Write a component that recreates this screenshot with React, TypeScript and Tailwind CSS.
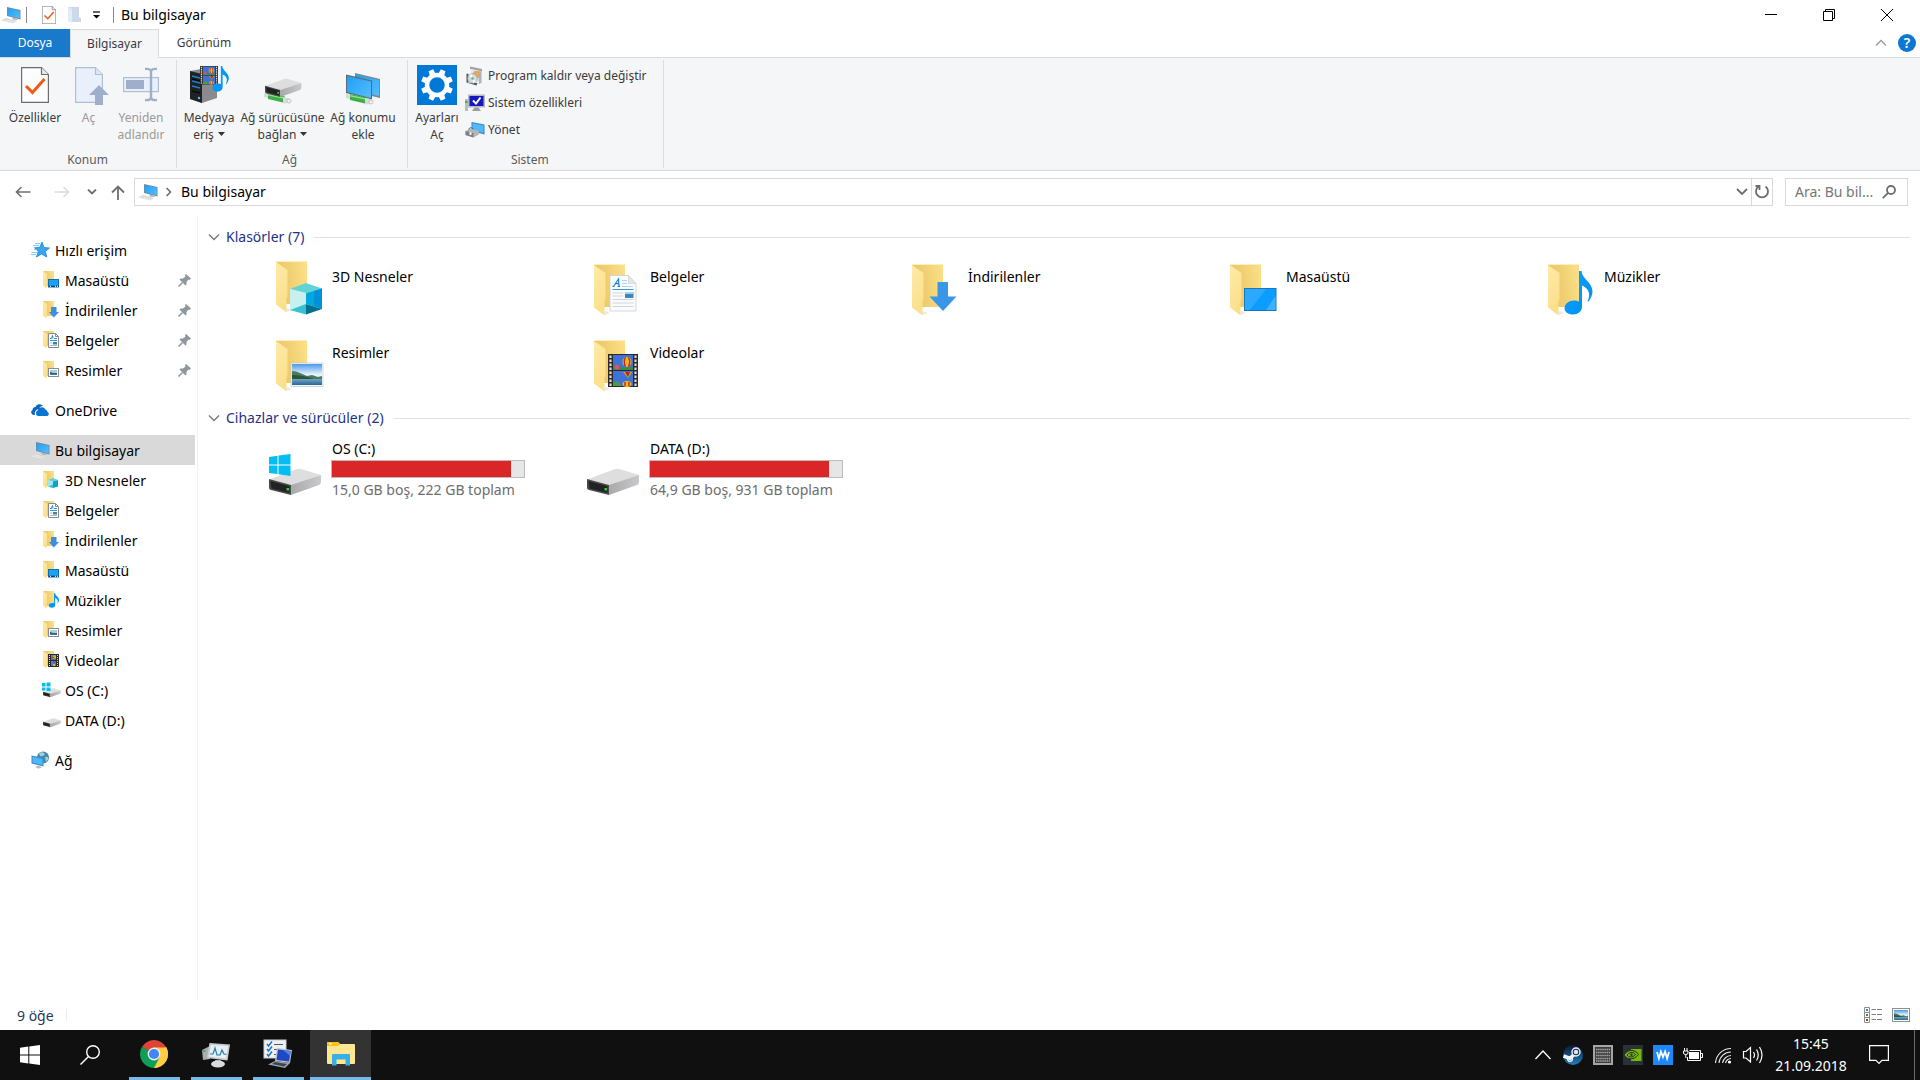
import React from 'react'

type Overlay = 'cube' | 'doc' | 'down' | 'desktop' | 'music' | 'picture' | 'video'

const Gradients: React.FC = () => (
  <svg className="absolute h-0 w-0" aria-hidden="true">
    <defs>
      <linearGradient id="folderBack" x1="0" y1="0.4" x2="1" y2="0.2">
        <stop offset="0.2" stopColor="#ecc96b" />
        <stop offset="1" stopColor="#fbdf87" />
      </linearGradient>
      <linearGradient id="folderFlap" x1="0" y1="0" x2="0.4" y2="1">
        <stop offset="0" stopColor="#ffeaa9" />
        <stop offset="1" stopColor="#fbdf8a" />
      </linearGradient>
      <linearGradient id="screen" x1="0" y1="0" x2="1" y2="1">
        <stop offset="0" stopColor="#1f9ff5" />
        <stop offset="1" stopColor="#56bdff" />
      </linearGradient>
      <linearGradient id="sky" x1="0" y1="0" x2="0" y2="1">
        <stop offset="0" stopColor="#4f98e8" />
        <stop offset="0.5" stopColor="#e6f4fd" />
        <stop offset="1" stopColor="#cfe6f2" />
      </linearGradient>
      <linearGradient id="lake" x1="0" y1="0" x2="0" y2="1">
        <stop offset="0" stopColor="#6fa5c4" />
        <stop offset="1" stopColor="#2b6597" />
      </linearGradient>
      <linearGradient id="driveSide" x1="0" y1="0" x2="1" y2="0">
        <stop offset="0" stopColor="#a9a9ab" />
        <stop offset="1" stopColor="#c9c9cb" />
      </linearGradient>
      <linearGradient id="note" x1="0" y1="0" x2="1" y2="1">
        <stop offset="0" stopColor="#0aa0f8" />
        <stop offset="1" stopColor="#0090f5" />
      </linearGradient>
      <linearGradient id="steam" x1="0" y1="0" x2="0" y2="1">
        <stop offset="0" stopColor="#0b1635" />
        <stop offset="1" stopColor="#1f80bd" />
      </linearGradient>
    </defs>
  </svg>
)

const Landscape: React.FC = () => (
  <>
    <rect x="0" y="0" width="30" height="21" fill="url(#sky)" />
    <path d="M0 7 Q4 7 8 9 L15 12 L20 11 L26 13 L30 12 V16 H0Z" fill="#4b7d5c" />
    <path d="M0 11 Q10 11 22 15 H0Z" fill="#2d5440" />
    <rect x="0" y="15" width="30" height="6" fill="url(#lake)" />
  </>
)

const Film: React.FC = () => (
  <>
    <rect width="30" height="33" fill="#2c2a28" />
    <rect x="5" y="1" width="20" height="15" fill="#3f72d8" />
    <rect x="5" y="17" width="20" height="15" fill="#3f72d8" />
    <path d="M5 12 L10 10 L14 14 L25 13 V16 H5Z" fill="#3e8a3b" />
    <circle cx="9" cy="13" r="2.500" fill="#dd4c86" />
    <ellipse cx="19" cy="8" rx="4.500" ry="5" fill="#e9b81e" />
    <path d="M17.500 3.500 q-2.500 4.500 0 9 M20.500 3.500 q2.500 4.500 0 9" stroke="#c8261d" strokeWidth="1.400" fill="none" />
    <path d="M15 18 H24 L20 24Z" fill="#d8a41b" />
    <path d="M17 18 H22 L20 23Z" fill="#b3241c" />
    <ellipse cx="19" cy="30" rx="4.500" ry="3" fill="#e9b81e" />
    <path d="M17 32 v-4 M21 32 v-4" stroke="#c8261d" strokeWidth="1.400" />
    <path d="M5 29 L10 27 L14 32 H5Z" fill="#4c9b46" />
    <path d="M2.500 1.500 V32 M27.500 1.500 V32" stroke="#dcdcdc" strokeWidth="2.200" strokeDasharray="2.400 1.600" />
  </>
)

const Note: React.FC = () => (
  <path
    d="M15 0 H17.500 C18 8 28 11 28.500 20 C28.700 24 26.500 28 24.500 30.500 L23.500 30 C27 24 25 17 18 14.500 V36 C18 40 14 43.500 9 43.500 C4 43.500 0.500 41 0.500 37 C0.500 33 5 29.500 10 29.500 C12 29.500 14 30 15 30.500Z"
    fill="url(#note)"
  />
)

const BigOverlay: React.FC<{ kind: Overlay }> = ({ kind }) => {
  switch (kind) {
    case 'cube':
      return (
        <g>
          <path d="M14 28 L30 22 L46 27.500 L30 32Z" fill="#5fd3d6" />
          <path d="M14 28 L30 32 V44 L14 49Z" fill="#c9f0ef" />
          <path d="M30 32 L46 27.500 V48 L30 43Z" fill="#00a9dd" />
          <path d="M38 30 L46 27.500 V48 L38 45Z" fill="#0092d8" />
          <path d="M14 49 L30 43 V53.500Z" fill="#34c2d0" />
          <path d="M30 43 L46 48 L30 53.500Z" fill="#04708f" />
        </g>
      )
    case 'doc':
      return (
        <g>
          <path d="M16 11.500 H34.500 L42 20 V47 H16Z" fill="#fafbfc" stroke="#c9ced3" strokeWidth="0.800" />
          <path d="M34.500 11.500 V19.500 H42Z" fill="#e3e6e9" stroke="#c9ced3" strokeWidth="0.600" />
          <path d="M18.500 22.500 H20.500 M19.500 22.500 L24.500 15 L25 22.500 M21 19.700 H25 M23.500 22.500 H26" stroke="#1d86ca" strokeWidth="1.200" fill="none" />
          <path d="M28 16.500 H33 M28 19.500 H33 M28 22.500 H39" stroke="#a9cfea" strokeWidth="0.900" />
          <path d="M18.500 25.500 H39.500" stroke="#3f97d2" strokeWidth="1" />
          <path d="M18.500 29 H29 M18.500 32 H29 M18.500 35.500 H39.500 M18.500 39 H39.500 M18.500 42.500 H39.500" stroke="#d2d6da" strokeWidth="1" />
          <rect x="31" y="28" width="8.500" height="6" fill="#3f86bc" />
          <rect x="31" y="28" width="8.500" height="2" fill="#a4d4f5" />
        </g>
      )
    case 'down':
      return <path d="M25.500 18 H36 V32.500 H44.500 L31 47 L17.500 32.500 H25.500Z" fill="#3a97e8" />
    case 'desktop':
      return (
        <g>
          <rect x="14.500" y="24.500" width="31.500" height="22" fill="#0a9cff" stroke="#1978b8" />
          <path d="M15 25 H36 L20 46 H15Z" fill="#2aa9ff" />
          <path d="M36 46 L45.500 32 V46Z" fill="#3eb1ff" />
        </g>
      )
    case 'music':
      return (
        <g transform="translate(16 7)">
          <Note />
        </g>
      )
    case 'picture':
      return (
        <g>
          <rect x="15" y="23" width="32" height="23.500" fill="#f5f8fa" stroke="#b9c1c7" strokeWidth="0.600" />
          <g transform="translate(16 24)">
            <Landscape />
          </g>
        </g>
      )
    case 'video':
      return (
        <g transform="translate(14 14)">
          <Film />
        </g>
      )
  }
}

const BigFolder: React.FC<{ kind: Overlay }> = ({ kind }) => (
  <svg width="48" height="56" viewBox="0 -3 48 56" aria-hidden="true">
    <g transform={kind === 'cube' ? 'translate(0 -3)' : undefined}>
      <path d="M10 51 L16 49 L11 47Z" fill="#e8e8e8" />
      <rect x="0" y="0" width="31" height="43" fill="url(#folderBack)" />
      <path d="M0 0.500 H31" stroke="#fdeebb" strokeWidth="1" />
      <path d="M0 1 L11.500 9 V36 L10.500 37 V51.500 L0 43.500Z" fill="url(#folderFlap)" />
      <BigOverlay kind={kind} />
    </g>
  </svg>
)

const SmallOverlay: React.FC<{ kind: Overlay }> = ({ kind }) => {
  switch (kind) {
    case 'cube':
      return (
        <g>
          <path d="M5 9 L10 7 L15 9 L10 10.500Z" fill="#5fd3d6" />
          <path d="M5 9 L10 10.500 V17 L5 15.500Z" fill="#a5e6e8" />
          <path d="M10 10.500 L15 9 V15.500 L10 17Z" fill="#0aa0cf" />
          <path d="M5 15.500 L10 13.500 V17Z" fill="#34c2d0" />
        </g>
      )
    case 'doc':
      return (
        <g>
          <path d="M5.500 2.500 H12.500 L15.500 5.500 V16.500 H5.500Z" fill="#fff" stroke="#8a8a8a" />
          <path d="M12.500 2.500 V5.500 H15.500" fill="none" stroke="#8a8a8a" />
          <path d="M7 7.500 H8.500 L9.500 4.500 L10 7.500" fill="none" stroke="#1d86ca" />
          <path d="M11 7.500 H14 M7 9.500 H14" stroke="#2f92d4" />
          <path d="M7 12 H9.500 M7 14.500 H14" stroke="#9bbdd6" />
          <rect x="10" y="11" width="4" height="2.500" fill="#4d7f9c" />
        </g>
      )
    case 'down':
      return <path d="M8 6 H13.500 V11 H16 L10.800 16.500 L5.800 11 H8Z" fill="#3a8fe0" />
    case 'desktop':
      return (
        <g>
          <rect x="5.500" y="8.500" width="10" height="7.500" fill="#1ba1f5" stroke="#0d6db0" />
          <path d="M6 15.300 H15.500" stroke="#0b3f66" strokeWidth="1.200" />
          <path d="M7 15.300 h1 M12 15.300 h1 M14 15.300 h1" stroke="#fff" />
        </g>
      )
    case 'music':
      return (
        <g transform="translate(5.500 2) scale(0.370 0.340)">
          <Note />
        </g>
      )
    case 'picture':
      return (
        <g>
          <rect x="5.500" y="7.500" width="10" height="8" fill="#fff" stroke="#8e8e8e" />
          <rect x="7" y="9" width="7" height="5" fill="#a6cdee" />
          <path d="M7 11 L10 12 L14 12 V13 H7Z" fill="#35614c" />
          <rect x="7" y="13" width="7" height="1" fill="#3e7eb0" />
        </g>
      )
    case 'video':
      return (
        <g>
          <rect x="5" y="3" width="11" height="13" fill="#2c2a28" />
          <rect x="8" y="4" width="5" height="5" fill="#4a7de0" />
          <rect x="8" y="10" width="5" height="5" fill="#4a7de0" />
          <rect x="10" y="4.500" width="3" height="3" fill="#e9a51e" />
          <path d="M8 8 H13 V9 H8Z M8 14 H10 V15 H8Z" fill="#3e8a3b" />
          <path d="M9 6.500 H11 M10 11 H13" stroke="#c8322d" />
          <rect x="10" y="13" width="2" height="2" fill="#e9b81e" />
          <path d="M6.500 4 V16 M14.500 4 V16" stroke="#d8d8d8" strokeDasharray="1 1" />
        </g>
      )
  }
}

const SmallFolder: React.FC<{ kind: Overlay }> = ({ kind }) => (
  <svg width="17" height="18" viewBox="0 0 17 18" aria-hidden="true">
    <rect width="11" height="15" fill="url(#folderBack)" />
    <path d="M0 0 L4 3 V17 L0 15Z" fill="url(#folderFlap)" />
    <SmallOverlay kind={kind} />
  </svg>
)

const ComputerIcon: React.FC = () => (
  <svg width="20" height="20" viewBox="0 0 20 20" aria-hidden="true">
    <path d="M6 2 L19.500 5 V14.500 L6 11Z" fill="#6f8da0" />
    <path d="M6.800 3.200 L18.700 5.800 V13.300 L6.800 10.300Z" fill="url(#screen)" />
    <path d="M11 12.500 L16 13.700 L17 15 L12 14.500Z" fill="#a9adb0" />
    <path d="M0 15.500 L5 13 L16 16 L12 18.500Z" fill="#d3d6d8" />
    <path d="M1.500 15.800 L12 18 M4 14.700 L14 17" stroke="#fff" strokeWidth="0.700" strokeDasharray="1.500 0.800" />
  </svg>
)

const WindowsLogo: React.FC<{ size: number; color: string }> = ({ size, color }) => (
  <svg width={size} height={size} viewBox="0 0 20 20" fill={color} aria-hidden="true">
    <path d="M0 2.800 L8.300 1.600 V9.500 H0Z M9.300 1.400 L20 0 V9.500 H9.300Z M0 10.500 H8.300 V18.400 L0 17.200Z M9.300 10.500 H20 V20 L9.300 18.600Z" />
  </svg>
)

const DriveShape: React.FC = () => (
  <>
    <path d="M0 11.500 L28 1 Q30 0.500 32 1 L52 7 L22 17.500Z" fill="#dededf" />
    <path d="M0 11 L22 17 V27 L2 22 Q0 21.500 0 20Z" fill="#4a4a4a" />
    <path d="M1.500 13 L20.500 18.300 V25 L2.500 20.500Z" fill="#222" />
    <path d="M22 17 L52 7 V14 Q52 16 50 17 L22 27Z" fill="url(#driveSide)" />
    <rect x="17.500" y="20" width="2.500" height="2.500" fill="#2bd32b" />
  </>
)

const BigDrive: React.FC<{ system?: boolean }> = ({ system }) => (
  <svg width="52" height="42" viewBox="0 0 52 42" aria-hidden="true">
    <g transform="translate(0 14)">
      <DriveShape />
    </g>
    {system && (
      <path d="M0 3 L8.500 1.800 V10.500 H0Z M9.500 1.600 L21.500 0 V10.500 H9.500Z M0 11.500 H8.500 V20 L0 19Z M9.500 11.500 H21.500 V22 L9.500 20.300Z" fill="#04bdf2" />
    )}
  </svg>
)

const SmallDrive: React.FC<{ system?: boolean }> = ({ system }) => (
  <svg width="19" height="16" viewBox="0 0 19 16" aria-hidden="true">
    <g transform="translate(1 6) scale(0.340)">
      <DriveShape />
    </g>
    {system && <path d="M0 1 H3.500 V4.500 H0Z M4.500 0.500 H8.500 V4.500 H4.500Z M0 5.500 H3.500 V8.500 H0Z M4.500 5.500 H8.500 V9 H4.500Z" fill="#04bdf2" />}
  </svg>
)

const StarIcon: React.FC = () => (
  <svg width="19" height="18" viewBox="0 0 19 18" aria-hidden="true">
    <path d="M11 1 L13 6.500 L18.500 7 L14.300 10.500 L15.800 16 L10.500 13 L5.500 16 L7.300 10.200 L3.500 6.800 L8.800 6.300Z" fill="#36a6ee" stroke="#1c86d1" strokeWidth="0.800" />
    <path d="M4 2.500 H9 M2 4.500 H8 M0.500 11.500 H6 M0 13.500 H5 M3 8.500 H6" stroke="#63bdf2" strokeWidth="0.800" />
  </svg>
)

const CloudIcon: React.FC = () => (
  <svg width="19" height="13" viewBox="0 0 19 13" aria-hidden="true">
    <path d="M4 11 H2.500 A2.700 2.700 0 0 1 1.500 6 A3.200 3.200 0 0 1 4.500 3 A4.300 4.300 0 0 1 12 2 A4 4 0 0 0 8 5 A4.500 4.500 0 0 0 4 11Z" fill="#0a64c0" />
    <path d="M7 12 A3 3 0 0 1 6.500 6.500 A4.300 4.300 0 0 1 14.500 5.500 A3 3 0 0 1 16.500 8 A2.200 2.200 0 0 1 16.500 12Z" fill="#0a74d6" />
  </svg>
)

const NetworkIcon: React.FC = () => (
  <svg width="19" height="18" viewBox="0 0 19 18" aria-hidden="true">
    <circle cx="12" cy="6.500" r="6" fill="#4688ab" />
    <path d="M8 2 Q12 0 14 3 Q12 6 9 5Z M14 6 Q17 5 17.500 8 L15 11Z" fill="#9fd0dc" />
    <path d="M0.500 4.500 L12.500 7 V15.500 L0.500 12.500Z" fill="#3a8fc8" />
    <path d="M1.500 5.800 L11.500 8 V14 L1.500 11.600Z" fill="#4fb6fb" />
    <path d="M4 15.500 L8 14.500 L11 16.500 L7 17.800Z" fill="#b9bec2" />
  </svg>
)

const PinIcon: React.FC = () => (
  <svg width="13" height="13" viewBox="0 0 13 13" className="text-[#8d979e]" aria-hidden="true">
    <path d="M8 0 L13 4.500 L11.500 6 L10.500 5.500 L8.500 8 L8.500 10.500 L7.500 11.500 L1.500 5.500 L2.500 4.500 L5 4.500 L7.500 2.500 L7 1Z" fill="currentColor" />
    <path d="M4.500 8.500 L0.500 12.500" stroke="currentColor" strokeWidth="1.500" />
  </svg>
)

const Caret: React.FC = () => (
  <svg width="7" height="4" viewBox="0 0 7 4" className="mb-1 ml-1 inline" aria-hidden="true">
    <path d="M0 0 H7 L3.500 4Z" fill="#333" />
  </svg>
)

const Chevron: React.FC<{ color?: string }> = ({ color = '#767676' }) => (
  <svg width="12" height="8" viewBox="0 0 12 8" aria-hidden="true">
    <path d="M1 1.500 L6 6.500 L11 1.500" fill="none" stroke={color} strokeWidth="1.300" />
  </svg>
)

const CheckPage: React.FC<{ w: number; h: number }> = ({ w, h }) => (
  <svg width={w} height={h} viewBox="0 0 28 36" aria-hidden="true">
    <path d="M0.600 0.600 H20.500 L27.400 7.500 V35.400 H0.600Z" fill="#fdfdfd" stroke="#6d6d6d" strokeWidth="1.200" />
    <path d="M20.500 0.600 V7.500 H27.400" fill="#eaeaea" stroke="#6d6d6d" strokeWidth="1.200" />
    <path d="M5 19 L11.500 25.500 L23.500 12" fill="none" stroke="#ee5a17" strokeWidth="3" />
  </svg>
)

const OpenIcon: React.FC = () => (
  <svg width="42" height="40" viewBox="0 0 42 40" aria-hidden="true">
    <path d="M7.600 2.600 H27.500 L34.400 9.500 V37.400 H7.600Z" fill="#e9f0fb" stroke="#b0bdd6" strokeWidth="1.200" />
    <path d="M27.500 2.600 V9.500 H34.400" fill="#dfe7f5" stroke="#b0bdd6" strokeWidth="1.200" />
    <path d="M31 20 L41 30 H35 V40 H27 V30 H21Z" fill="#9fafcb" />
  </svg>
)

const RenameIcon: React.FC = () => (
  <svg width="40" height="40" viewBox="0 0 40 40" aria-hidden="true">
    <rect x="2.600" y="12.600" width="34.800" height="14" fill="#e9f0fb" stroke="#b0bdd6" strokeWidth="1.200" />
    <rect x="5" y="15" width="18" height="9" fill="#9fafcb" />
    <path d="M24 4 Q29 3.500 30 6 Q31 3.500 36 4 M30 5 V34 M24 35 Q29 35.500 30 33 Q31 35.500 36 35" fill="none" stroke="#9fafcb" strokeWidth="2.400" />
  </svg>
)

const MediaIcon: React.FC = () => (
  <svg width="40" height="40" viewBox="0 0 40 40" aria-hidden="true">
    <path d="M1 6 L12 4 L28 6 V33 L13 38 L1 34Z" fill="#8b8b8d" />
    <path d="M1 6 L13 9 V38 L1 34Z" fill="#1f2124" />
    <path d="M3 11 L11 13 M3 16 L11 18 M3 21 L11 23" stroke="#1c80c9" strokeWidth="1.400" />
    <path d="M3 14 L11 16 M3 26 L11 28" stroke="#000" strokeWidth="1" />
    <circle cx="10" cy="33" r="1.200" fill="#43c8f8" />
    <g transform="translate(11 1) scale(0.600 0.560)">
      <Film />
    </g>
    <g transform="translate(23 1) scale(0.590)">
      <Note />
    </g>
  </svg>
)

const GreenCable: React.FC = () => (
  <>
    <path d="M3 28 L10 29 V34 L3 32Z" fill="#d7dadb" />
    <path d="M7 28 L24 31.500 V38 L7 34Z" fill="#3fae4a" />
    <path d="M7 29 L24 32.500 V34 L7 30.500Z" fill="#8be08f" />
    <path d="M22 32 L29 33.500 V38 L22 38.500Z" fill="#d7dadb" />
    <circle cx="28" cy="36" r="2" fill="#f2f2f2" stroke="#aaa" strokeWidth="0.600" />
  </>
)

const NetDriveIcon: React.FC = () => (
  <svg width="40" height="40" viewBox="0 0 40 40" aria-hidden="true">
    <g transform="translate(-2 0)">
      <GreenCable />
    </g>
    <g transform="translate(2 13) scale(0.700 0.700)">
      <DriveShape />
    </g>
  </svg>
)

const NetPlaceIcon: React.FC = () => (
  <svg width="40" height="40" viewBox="0 0 40 40" aria-hidden="true">
    <path d="M12 8 L37 14 V33 L12 27Z" fill="#7a8890" />
    <path d="M13 9.500 L36 15 V31 L13 25.500Z" fill="url(#screen)" />
    <path d="M3 9.500 L29 15.500 V34.500 L3 28Z" fill="#5d6b74" />
    <path d="M4 11 L28 16.500 V33 L4 27Z" fill="url(#screen)" />
    <g transform="translate(0 1)">
      <GreenCable />
    </g>
  </svg>
)

const SettingsIcon: React.FC = () => (
  <svg width="40" height="40" viewBox="0 0 40 40" aria-hidden="true">
    <rect width="40" height="40" fill="#0078d7" />
    <circle cx="20" cy="20" r="10" fill="none" stroke="#fff" strokeWidth="4.500" />
    <g fill="#fff">
      {[22.5, 67.5, 112.5, 157.5, 202.5, 247.5, 292.5, 337.5].map((a) => (
        <path key={a} d="M17 9 L17.500 4 H22.500 L23 9Z" transform={`rotate(${a} 20 20)`} />
      ))}
    </g>
  </svg>
)

const UninstallIcon: React.FC = () => (
  <svg width="20" height="20" viewBox="0 0 20 20" aria-hidden="true">
    <path d="M5 0.500 L17 3 V5.500 L5 3Z" fill="#9fa3a6" />
    <path d="M6 3 L15 5 V16 L6 14Z" fill="#e4e6e7" />
    <circle cx="11.500" cy="8.500" r="3.800" fill="#f0a64c" />
    <path d="M13.500 5 L16.500 5.500 V17 L14 18Z" fill="#aeb2b5" />
    <path d="M1.500 7.500 L3.500 8 V17 L12.500 17 L11.500 19.500 L1.500 16.500Z" fill="#55595d" />
    <circle cx="7.500" cy="12.500" r="4.800" fill="#d5dde0" stroke="#8f989d" strokeWidth="0.700" />
    <path d="M7.500 12.500 L4 9.500 L7 8Z M7.500 12.500 L11 15.500 L8 17Z" fill="#f7fafa" />
    <circle cx="7.500" cy="12.500" r="1.300" fill="#75a97b" />
  </svg>
)

const SystemIcon: React.FC = () => (
  <svg width="20" height="20" viewBox="0 0 20 20" aria-hidden="true">
    <path d="M0 6 H3 V18 H0Z" fill="#b8bcbe" />
    <rect x="0" y="8" width="2.500" height="2" fill="#37b53f" />
    <rect x="3" y="1.500" width="17" height="13" fill="#b7b9bc" />
    <rect x="4.500" y="3" width="14" height="10" fill="#1517c0" />
    <path d="M8 7.500 L11 10.500 L15.500 4.500" fill="none" stroke="#fff" strokeWidth="2" />
    <path d="M9.500 14.500 H13.500 L16 18 H7Z" fill="#9c9fa2" />
  </svg>
)

const ManageIcon: React.FC = () => (
  <svg width="20" height="20" viewBox="0 0 20 20" aria-hidden="true">
    <path d="M6.500 2 L19.500 4.500 V14.500 L6.500 11Z" fill="#3a87bd" />
    <path d="M7.500 3.200 L18.500 5.300 V13 L7.500 10.200Z" fill="#50b8fb" />
    <path d="M0.500 11 L5 8.500 L14 11 V14.500 L8.500 17.500 L0.500 15Z" fill="#b3b6b9" />
    <path d="M0.500 11 L8.500 13 V17.500 L0.500 15Z" fill="#7d8184" />
    <path d="M3.500 9 Q5.500 6 8.500 9" fill="none" stroke="#666" />
    <rect x="4.500" y="12" width="2" height="3" fill="#f0f0f0" />
  </svg>
)

const RibbonButton: React.FC<{ icon: React.ReactNode; width: string; disabled?: boolean; children: React.ReactNode }> = ({ icon, width, disabled, children }) => (
  <button type="button" disabled={disabled} className={`flex shrink-0 flex-col items-center gap-1 whitespace-nowrap leading-[17px] ${width} ${disabled ? 'text-[#9a9a9a]' : 'text-[#3b3b3b]'}`}>
    <span className="flex h-10 items-center justify-center">{icon}</span>
    <span>{children}</span>
  </button>
)

const RibbonGroup: React.FC<{ label: string; className: string; children: React.ReactNode }> = ({ label, className, children }) => (
  <div className="flex py-[2px]">
    <section aria-label={label} className={`flex flex-col border-r border-[#dcddde] pt-[5px] ${className}`}>
      <div className="flex flex-1 items-start">{children}</div>
      <div className="text-center leading-[17px] text-[#5c5c5c]">{label}</div>
    </section>
  </div>
)

const systemLinks = [
  { label: 'Program kaldır veya değiştir', icon: <UninstallIcon /> },
  { label: 'Sistem özellikleri', icon: <SystemIcon /> },
  { label: 'Yönet', icon: <ManageIcon /> },
]

const Ribbon: React.FC = () => (
  <div className="flex h-[113px] border-b border-[#dadbdc] bg-[#f5f6f7] text-xs">
    <RibbonGroup label="Konum" className="pr-[6px] pl-[5px]">
      <RibbonButton width="w-[60px]" icon={<CheckPage w={28} h={36} />}>Özellikler</RibbonButton>
      <RibbonButton width="w-[47px]" disabled icon={<OpenIcon />}>Aç</RibbonButton>
      <RibbonButton width="w-[58px]" disabled icon={<RenameIcon />}>Yeniden<br />adlandır</RibbonButton>
    </RibbonGroup>
    <RibbonGroup label="Ağ" className="pr-2 pl-[3px]">
      <RibbonButton width="w-[58px]" icon={<MediaIcon />}>Medyaya<br />eriş<Caret /></RibbonButton>
      <RibbonButton width="w-[89px]" icon={<NetDriveIcon />}>Ağ sürücüsüne<br />bağlan<Caret /></RibbonButton>
      <RibbonButton width="w-[72px]" icon={<NetPlaceIcon />}>Ağ konumu<br />ekle</RibbonButton>
    </RibbonGroup>
    <RibbonGroup label="Sistem" className="pr-4 pl-[5px]">
      <RibbonButton width="w-12" icon={<SettingsIcon />}>Ayarları<br />Aç</RibbonButton>
      <div className="flex flex-col gap-[7px] pt-px pl-1">
        {systemLinks.map((s) => (
          <button key={s.label} type="button" className="flex h-5 items-center gap-[3px] whitespace-nowrap text-[#3b3b3b]">
            {s.icon}
            {s.label}
          </button>
        ))}
      </div>
    </RibbonGroup>
  </div>
)

const TitleBar: React.FC = () => (
  <header className="flex h-[29px] items-center">
    <div className="flex flex-1 items-center">
      <span className="ml-px"><ComputerIcon /></span>
      <span className="ml-[5px] h-4 w-px bg-[#8a8a8a]" />
      <button type="button" aria-label="Özellikler" className="ml-[15px]"><CheckPage w={14} h={18} /></button>
      <button type="button" aria-label="Yeni klasör" className="ml-3">
        <svg width="13" height="18" viewBox="0 0 13 18" aria-hidden="true">
          <path d="M0 1 H11 V11 L13 12 V16 H3 L0 15Z" fill="#ccd8ec" />
          <path d="M0 1 L4 3 V17 L0 15Z" fill="#e3ebf8" />
        </svg>
      </button>
      <button type="button" aria-label="Araç çubuğunu özelleştir" className="ml-3">
        <svg width="8" height="8" viewBox="0 0 8 8" aria-hidden="true">
          <path d="M0 1 H7" stroke="#000" strokeWidth="1.200" />
          <path d="M0 4 H7 L3.500 7.500Z" fill="#000" />
        </svg>
      </button>
      <span className="ml-3 h-4 w-px bg-[#8a8a8a]" />
      <h1 className="ml-[7px] text-sm">Bu bilgisayar</h1>
    </div>
    <div className="flex pr-1">
      <button type="button" aria-label="Simge durumuna küçült" className="flex h-[29px] w-[58px] items-center justify-center">
        <svg width="12" height="12" viewBox="0 0 12 12"><path d="M0 5.500 H12" stroke="#000" /></svg>
      </button>
      <button type="button" aria-label="Önceki boyut" className="flex h-[29px] w-[58px] items-center justify-center">
        <svg width="12" height="12" viewBox="0 0 12 12" fill="none" stroke="#000"><path d="M0.500 2.500 H9.500 V11.500 H0.500Z M2.500 2.500 V0.500 H11.500 V9.500 H9.500" /></svg>
      </button>
      <button type="button" aria-label="Kapat" className="flex h-[29px] w-[58px] items-center justify-center">
        <svg width="12" height="12" viewBox="0 0 12 12" stroke="#000"><path d="M0 0 L12 12 M12 0 L0 12" /></svg>
      </button>
    </div>
  </header>
)

const TabBar: React.FC = () => (
  <div className="flex h-[29px] items-end text-xs text-[#3b3b3b]">
    <button type="button" className="h-[29px] w-[70px] border-b border-[#dadbdc] bg-[#1979ca] text-white">Dosya</button>
    <button type="button" className="h-[29px] w-[89px] border-x border-t border-[#dadbdc] bg-[#f5f6f7]">Bilgisayar</button>
    <button type="button" className="h-[29px] w-[90px] border-b border-[#dadbdc]">Görünüm</button>
    <div className="flex h-[29px] flex-1 items-center justify-end gap-[11px] border-b border-[#dadbdc] pr-[4px]">
      <button type="button" aria-label="Şeridi simge durumuna küçült" className="rotate-180"><Chevron color="#9a9a9a" /></button>
      <button type="button" aria-label="Yardım" className="flex h-[18px] w-[18px] items-center justify-center rounded-full bg-[#0d77d4] text-sm leading-none font-semibold text-white">?</button>
    </div>
  </div>
)

const AddressBar: React.FC = () => (
  <nav className="flex h-[44px] items-start pt-[7px] pr-3">
    <div className="flex h-[28px] w-[134px] shrink-0 items-center pl-[15px] text-[#6e6e6e]">
      <button type="button" aria-label="Geri">
        <svg width="16" height="12" viewBox="0 0 16 12" fill="none" stroke="currentColor" strokeWidth="1.600"><path d="M15.500 6 H1.500 M6.500 1 L1.500 6 L6.500 11" /></svg>
      </button>
      <button type="button" aria-label="İleri" disabled className="ml-[23px] text-[#dcdcdc]">
        <svg width="16" height="12" viewBox="0 0 16 12" fill="none" stroke="currentColor" strokeWidth="1.600"><path d="M0.500 6 H14.500 M9.500 1 L14.500 6 L9.500 11" /></svg>
      </button>
      <button type="button" aria-label="Son konumlar" className="ml-[17px]">
        <svg width="10" height="6" viewBox="0 0 10 6" fill="none" stroke="currentColor" strokeWidth="1.800"><path d="M1 0.500 L5 4.500 L9 0.500" /></svg>
      </button>
      <button type="button" aria-label="Yukarı" className="ml-[14px]">
        <svg width="14" height="15" viewBox="0 0 14 15" fill="none" stroke="currentColor" strokeWidth="1.800"><path d="M7 15 V1.500 M1 7.500 L7 1.500 L13 7.500" /></svg>
      </button>
    </div>
    <div className="flex h-[28px] flex-1 items-center border border-[#d9d9d9] pl-[3px]">
      <ComputerIcon />
      <svg width="8" height="10" viewBox="0 0 8 10" className="ml-[7px]" fill="none" stroke="#6e6e6e" strokeWidth="1.600" aria-hidden="true"><path d="M1.500 1 L5.500 5 L1.500 9" /></svg>
      <a href="#bu-bilgisayar" className="ml-2 flex-1 text-sm">Bu bilgisayar</a>
      <button type="button" aria-label="Önceki konumlar" className="px-[3px]">
        <svg width="12" height="8" viewBox="0 0 12 8" fill="none" stroke="#6e6e6e" strokeWidth="1.800"><path d="M1 1 L6 6 L11 1" /></svg>
      </button>
      <button type="button" aria-label="Yenile" className="flex h-full w-[21px] items-center justify-center border-l border-[#d9d9d9]">
        <svg width="16" height="16" viewBox="0 0 16 16" fill="none" stroke="#6e6e6e" strokeWidth="1.800"><path d="M11.500 2.500 A6 6 0 1 1 4.500 2.500 M1.500 2 H5.500 V6" /></svg>
      </button>
    </div>
    <label className="ml-3 flex h-[28px] w-[123px] items-center border border-[#d9d9d9] pr-[11px] pl-[9px]">
      <input type="text" aria-label="Ara: Bu bilgisayar" placeholder="Ara: Bu bil..." className="w-full min-w-0 flex-1 text-sm outline-none placeholder:text-[#767676]" />
      <svg width="14" height="14" viewBox="0 0 14 14" className="shrink-0" fill="none" stroke="#6e6e6e" strokeWidth="1.800" aria-hidden="true"><circle cx="9" cy="5" r="4" /><path d="M6 8 L0.800 13.200" /></svg>
    </label>
  </nav>
)

const TreeItem: React.FC<{ icon: React.ReactNode; label: string; child?: boolean; pinned?: boolean; selected?: boolean }> = ({ icon, label, child, pinned, selected }) => (
  <button type="button" className={`flex h-[30px] w-full items-center pr-1 text-left leading-5 ${child ? 'pl-10' : 'pl-[30px]'} ${selected ? 'bg-[#d9d9d9]' : ''}`}>
    <span className={`flex shrink-0 justify-center ${child ? 'w-[22px]' : 'w-5'}`}>{icon}</span>
    <span className={`flex-1 pt-[2px] ${child ? 'ml-[3px]' : 'ml-[5px]'}`}>{label}</span>
    {pinned && <PinIcon />}
  </button>
)

const folders: { label: string; kind: Overlay }[] = [
  { label: '3D Nesneler', kind: 'cube' },
  { label: 'Belgeler', kind: 'doc' },
  { label: 'İndirilenler', kind: 'down' },
  { label: 'Masaüstü', kind: 'desktop' },
  { label: 'Müzikler', kind: 'music' },
  { label: 'Resimler', kind: 'picture' },
  { label: 'Videolar', kind: 'video' },
]

const quickAccess: { label: string; kind: Overlay }[] = [
  { label: 'Masaüstü', kind: 'desktop' },
  { label: 'İndirilenler', kind: 'down' },
  { label: 'Belgeler', kind: 'doc' },
  { label: 'Resimler', kind: 'picture' },
]

const drives = [
  { label: 'OS (C:)', free: '15,0 GB boş, 222 GB toplam', used: 93, system: true },
  { label: 'DATA (D:)', free: '64,9 GB boş, 931 GB toplam', used: 93, system: false },
]

const Sidebar: React.FC = () => (
  <aside className="flex w-[198px] shrink-0 flex-col gap-[10px] border-r border-[#f3f3f3] pt-5 pr-[2px] text-sm">
    <div>
      <TreeItem icon={<StarIcon />} label="Hızlı erişim" />
      {quickAccess.map((f) => (
        <TreeItem key={f.label} child pinned icon={<SmallFolder kind={f.kind} />} label={f.label} />
      ))}
    </div>
    <TreeItem icon={<CloudIcon />} label="OneDrive" />
    <div>
      <TreeItem selected icon={<ComputerIcon />} label="Bu bilgisayar" />
      {folders.map((f) => (
        <TreeItem key={f.label} child icon={<SmallFolder kind={f.kind} />} label={f.label} />
      ))}
      {drives.map((d) => (
        <TreeItem key={d.label} child icon={<SmallDrive system={d.system} />} label={d.label} />
      ))}
    </div>
    <TreeItem icon={<NetworkIcon />} label="Ağ" />
  </aside>
)

const GroupHeader: React.FC<{ title: string }> = ({ title }) => (
  <div className="flex h-5 items-center">
    <button type="button" className="flex items-center gap-[6px] text-[#1e3287]">
      <Chevron />
      <h2>{title}</h2>
    </button>
    <span className="ml-[9px] h-px flex-1 bg-[#e2e2e2]" />
  </div>
)

const Content: React.FC = () => (
  <main className="flex-1 pt-3 pr-[10px] pl-[10px] text-sm">
    <GroupHeader title="Klasörler (7)" />
    <ul className="mt-[14px] ml-[68px] grid grid-cols-[repeat(auto-fill,318px)]">
      {folders.map((f) => (
        <li key={f.label} className="flex h-[76px] items-start gap-2">
          <BigFolder kind={f.kind} />
          <span className="mt-[6px]">{f.label}</span>
        </li>
      ))}
    </ul>
    <div className="-mt-[5px]">
      <GroupHeader title="Cihazlar ve sürücüler (2)" />
    </div>
    <ul className="mt-[11px] ml-[61px] grid grid-cols-[repeat(auto-fill,318px)]">
      {drives.map((d) => (
        <li key={d.label} className="flex items-end gap-[10px]">
          <div className="pb-1"><BigDrive system={d.system} /></div>
          <div>
            <div className="pl-px leading-5">{d.label}</div>
            <div role="progressbar" aria-label={d.label} aria-valuenow={d.used} className="mt-px h-[18px] w-[194px] border border-[#bcbcbc] bg-[#e6e6e6]">
              <div className="h-full bg-[#da2626]" style={{ width: `${d.used}%` }} />
            </div>
            <div className="mt-[2px] pl-px leading-5 text-[#6d6d6d]">{d.free}</div>
          </div>
        </li>
      ))}
    </ul>
  </main>
)

const StatusBar: React.FC = () => (
  <footer className="flex h-[30px] items-center pr-[10px] pl-[17px] text-sm text-[#1e395b]">
    <span className="pt-px">9 öğe</span>
    <span className="ml-3 h-3 w-px bg-[#ececec]" />
    <div className="ml-auto flex items-center gap-[10px]">
      <button type="button" aria-label="Ayrıntılar">
        <svg width="18" height="16" viewBox="0 0 18 16" aria-hidden="true">
          <path d="M0.500 0.500 H5.500 V15.500 H0.500Z M0.500 5.500 H5.500 M0.500 10.500 H5.500" fill="#fff" stroke="#8e8e8e" />
          <rect x="2" y="2" width="2" height="2" fill="#3b7fb5" />
          <rect x="2" y="7" width="2" height="2" fill="#3c8a4c" />
          <rect x="2" y="12" width="2" height="2" fill="#c23a22" />
          <path d="M7.500 2.500 H12 M13 2.500 H18 M7.500 7.500 H12 M13 7.500 H18 M7.500 12.500 H12 M13 12.500 H18" stroke="#7d7d7d" />
        </svg>
      </button>
      <button type="button" aria-label="Büyük simgeler">
        <svg width="18" height="14" viewBox="0 0 18 14" aria-hidden="true">
          <rect x="0.500" y="0.500" width="17" height="13" fill="#fff" stroke="#8e8e8e" />
          <g transform="translate(2 2) scale(0.467 0.476)"><Landscape /></g>
        </svg>
      </button>
    </div>
  </footer>
)

const ChromeIcon: React.FC = () => (
  <svg width="28" height="28" viewBox="0 0 28 28" aria-hidden="true">
    <path d="M14 14 L1.900 7 A14 14 0 0 1 26.100 7Z" fill="#db4437" />
    <path d="M14 14 L26.100 7 A14 14 0 0 1 14 28Z" fill="#ffcd40" />
    <path d="M14 14 L14 28 A14 14 0 0 1 1.900 7Z" fill="#0f9d58" />
    <path d="M14 7.500 H26.400 A14 14 0 0 1 14 28 L19.600 17.200Z" fill="#ffcd40" />
    <path d="M1.900 7 L8.400 17.200 L14 14Z" fill="#0f9d58" />
    <path d="M8.400 17.200 L19.600 17.200 L14 28Z" fill="#0f9d58" />
    <circle cx="14" cy="14" r="6.400" fill="#f1f1f1" />
    <circle cx="14" cy="14" r="5.100" fill="#4285f4" />
  </svg>
)

const MonitorIcon: React.FC = () => (
  <svg width="28" height="28" viewBox="0 0 28 28" aria-hidden="true">
    <path d="M0 10 L8 6 V19 L1 20Z" fill="#a9adb0" />
    <rect x="0.500" y="10" width="3" height="2" fill="#43b649" />
    <path d="M7.500 3 L28 4.500 L25.500 20.500 L5 18Z" fill="#c9cccf" />
    <path d="M9 5 L26 6 L24 18.500 L7 16.500Z" fill="#e8eef3" />
    <path d="M8 14 L11 14 L13 8 L15 15 L18 15 L20 10 L22 14 L24.500 14.500" fill="none" stroke="#2180b5" strokeWidth="1.200" />
    <path d="M13 20 H19 L18 24 H14Z" fill="#a3a7aa" />
    <ellipse cx="16" cy="24" rx="7" ry="3.500" fill="#d9dbdd" />
  </svg>
)

const TaskListIcon: React.FC = () => (
  <svg width="30" height="30" viewBox="0 0 30 30" aria-hidden="true">
    <rect x="1" y="1" width="22" height="18" fill="#eef1f4" stroke="#c7ccd1" />
    <path d="M4 5 L5.500 7 L9 2.500 M4 10 L5.500 12 L9 7.500 M4 15 L5.500 17 L9 12.500" fill="none" stroke="#1b75b8" strokeWidth="1.500" />
    <path d="M11 5.500 H20 M11 10.500 H17 M11 15.500 H15" stroke="#555" strokeWidth="1.200" />
    <path d="M14 9 L29 11 L27 24 L12 22Z" fill="#b9c2cc" />
    <path d="M15 10.500 L27.800 12 L26 22.500 L13.500 21Z" fill="#1f49c4" />
    <path d="M20 11 L27.800 12 L27 17Z" fill="#5380e6" />
    <path d="M12 22 L27 24 L22 29 L5 25.500Z" fill="#9ca5ae" />
    <path d="M12 23 L24 25 L21 27.500 L9 25Z" fill="#3c434a" />
  </svg>
)

const ExplorerIcon: React.FC = () => (
  <svg width="28" height="24" viewBox="0 0 28 24" aria-hidden="true">
    <path d="M0 1 Q0 0 1 0 H11 L13 2 H27 Q28 2 28 3 V21 Q28 22 27 22 H1 Q0 22 0 21Z" fill="#ffe693" />
    <path d="M0 1 Q0 0 1 0 H11 L13 2 L11 4 H0Z" fill="#f7c21c" />
    <rect x="2" y="1" width="3" height="1.500" fill="#fff2b5" />
    <path d="M5 23.500 V13 Q5 12 6 12 H22 Q23 12 23 13 V23.500 H18.500 V17.500 H9.500 V23.500Z" fill="#37b0e6" />
  </svg>
)

const apps = [
  { name: 'Google Chrome', icon: <ChromeIcon /> },
  { name: 'Kaynak İzleyicisi', icon: <MonitorIcon /> },
  { name: 'Görevler', icon: <TaskListIcon /> },
]

const tray = [
  {
    name: 'Gizli simgeler',
    icon: <svg width="16" height="10" viewBox="0 0 16 10" fill="none" stroke="#fff" strokeWidth="1.300"><path d="M0.500 9 L8 1 L15.500 9" /></svg>,
  },
  {
    name: 'Steam',
    icon: (
      <svg width="20" height="20" viewBox="0 0 20 20">
        <circle cx="10" cy="10" r="10" fill="url(#steam)" />
        <path d="M0.500 11 L7 13.500 L12 8.500" stroke="#f0f3f6" strokeWidth="3.600" fill="none" />
        <circle cx="13" cy="7" r="4" fill="#132a4d" stroke="#f0f3f6" strokeWidth="1.400" />
        <circle cx="13" cy="7" r="2.300" fill="#dfe5ea" />
        <circle cx="7" cy="14" r="2.400" fill="none" stroke="#f0f3f6" strokeWidth="1.300" />
      </svg>
    ),
  },
  {
    name: 'Klavye',
    icon: (
      <svg width="20" height="20" viewBox="0 0 20 20">
        <rect x="1" y="1" width="18" height="18" fill="#3c3c3c" stroke="#a5a5a5" strokeWidth="2" />
        <path d="M3 4.500 H17 M3 7.500 H17 M3 10.500 H17 M3 13.500 H17 M3 16 H17" stroke="#a8a8a8" strokeWidth="1.400" strokeDasharray="1.500 0.600" />
      </svg>
    ),
  },
  {
    name: 'NVIDIA',
    icon: (
      <svg width="20" height="20" viewBox="0 0 20 20">
        <rect width="20" height="20" fill="#2b3138" />
        <path d="M8 4 H18.500 V16 H8Z" fill="#76b900" />
        <path d="M1 10 Q5 4.500 10 5.500 Q14 6.500 15.500 9.500 Q12 14 8 14 Q4 14 1 10Z" fill="#76b900" stroke="#2b3138" />
        <path d="M4 10 Q7 6.500 10 7.500 Q12 8.500 12.500 9.500 Q10 12.500 8 12 Q5 12 4 10Z" fill="#76b900" stroke="#2b3138" />
        <circle cx="8.500" cy="9.800" r="1.200" fill="#2b3138" />
      </svg>
    ),
  },
  {
    name: 'Ses yöneticisi',
    icon: (
      <svg width="20" height="20" viewBox="0 0 20 20">
        <rect width="20" height="20" fill="#1e88fb" />
        <path d="M4 7 L5.900 13.500 L7.900 6.500 L10 12 L12.100 6.500 L14.100 13.500 L16 7" fill="none" stroke="#fff" strokeWidth="1.800" />
      </svg>
    ),
  },
  {
    name: 'Pil',
    icon: (
      <svg width="20" height="14" viewBox="0 0 20 14" fill="none" stroke="#fff">
        <path d="M6.500 2.500 H17.500 V12.500 H4.500 V9 M18 5.500 H19.500 V9.500 H18" />
        <rect x="6.500" y="4.500" width="9" height="6" fill="#fff" />
        <path d="M0.500 3 H5 V5 Q5 6.500 2.800 6.500 Q0.500 6.500 0.500 5Z M1.500 0 V3 M4 0 V3 M2.800 6.500 V10" />
      </svg>
    ),
  },
  {
    name: 'Kablosuz ağ',
    icon: (
      <svg width="17" height="17" viewBox="0 0 17 17" fill="none" stroke="#e8e8e8" strokeWidth="1.100">
        <path d="M0.500 16 A15.500 15.500 0 0 1 16 1.500 M4 16 A12 12 0 0 1 16 5 M7.500 16 A9 9 0 0 1 16 8.500 M10.500 16 A6 6 0 0 1 16 11.500" />
        <circle cx="14.500" cy="15" r="1.600" fill="#fff" stroke="none" />
      </svg>
    ),
  },
  {
    name: 'Ses',
    icon: (
      <svg width="22" height="20" viewBox="0 0 22 20" fill="none" stroke="#fff" strokeWidth="1.200">
        <path d="M1.500 6.500 H4 L8.500 2.500 V17 L4 13 H1.500Z M11.500 7 Q13.500 10 11.500 13 M14.500 4.500 Q18 10 14.500 15.500 M17.500 2 Q22.500 10 17.500 18" />
      </svg>
    ),
  },
]

const Taskbar: React.FC = () => (
  <div className="flex h-[50px] items-stretch bg-[#101010] text-white">
    <button type="button" aria-label="Başlat" className="flex w-[60px] items-center justify-center"><WindowsLogo size={20} color="#fff" /></button>
    <button type="button" aria-label="Ara" className="mr-[3px] flex w-[60px] items-center justify-center">
      <svg width="20" height="20" viewBox="0 0 20 20" fill="none" stroke="#fff" strokeWidth="1.400"><circle cx="13" cy="7" r="6.300" /><path d="M8.500 11.500 L0.500 19.500" /></svg>
    </button>
    {apps.map((a) => (
      <button key={a.name} type="button" aria-label={a.name} className="flex w-[62px] flex-col items-center">
        <span className="flex flex-1 items-center">{a.icon}</span>
        <span className="h-[3px] w-[51px] bg-[#76b9ed]" />
      </button>
    ))}
    <button type="button" aria-label="Dosya Gezgini" className="ml-px flex w-[61px] flex-col items-center bg-[#333333]">
      <span className="flex flex-1 items-center"><ExplorerIcon /></span>
      <span className="h-[3px] w-full bg-[#76b9ed]" />
    </button>
    <div className="ml-auto flex">
      {tray.map((t) => (
        <button key={t.name} type="button" aria-label={t.name} className="flex w-[30px] items-center justify-center">{t.icon}</button>
      ))}
      <button type="button" className="flex w-[86px] flex-col items-center justify-center text-sm leading-[22px]">
        <span>15:45</span>
        <span>21.09.2018</span>
      </button>
      <button type="button" aria-label="Bildirimler" className="mr-[10px] flex w-[50px] items-center justify-center">
        <svg width="20" height="20" viewBox="0 0 20 20" fill="none" stroke="#fff" strokeWidth="1.200"><path d="M0.600 0.600 H19.400 V15.400 H13 L10 18.500 L7 15.400 H0.600Z" /></svg>
      </button>
      <button type="button" aria-label="Masaüstünü göster" className="w-[6px] border-l border-[#6a6a6a]" />
    </div>
  </div>
)

const App: React.FC = () => {
  return (
    <div className="flex min-h-screen flex-col bg-white font-['Noto_Sans','Open_Sans',sans-serif] text-black">
      <Gradients />
      <TitleBar />
      <TabBar />
      <Ribbon />
      <AddressBar />
      <div className="flex flex-1">
        <Sidebar />
        <Content />
      </div>
      <StatusBar />
      <Taskbar />
    </div>
  )
}

export default App
